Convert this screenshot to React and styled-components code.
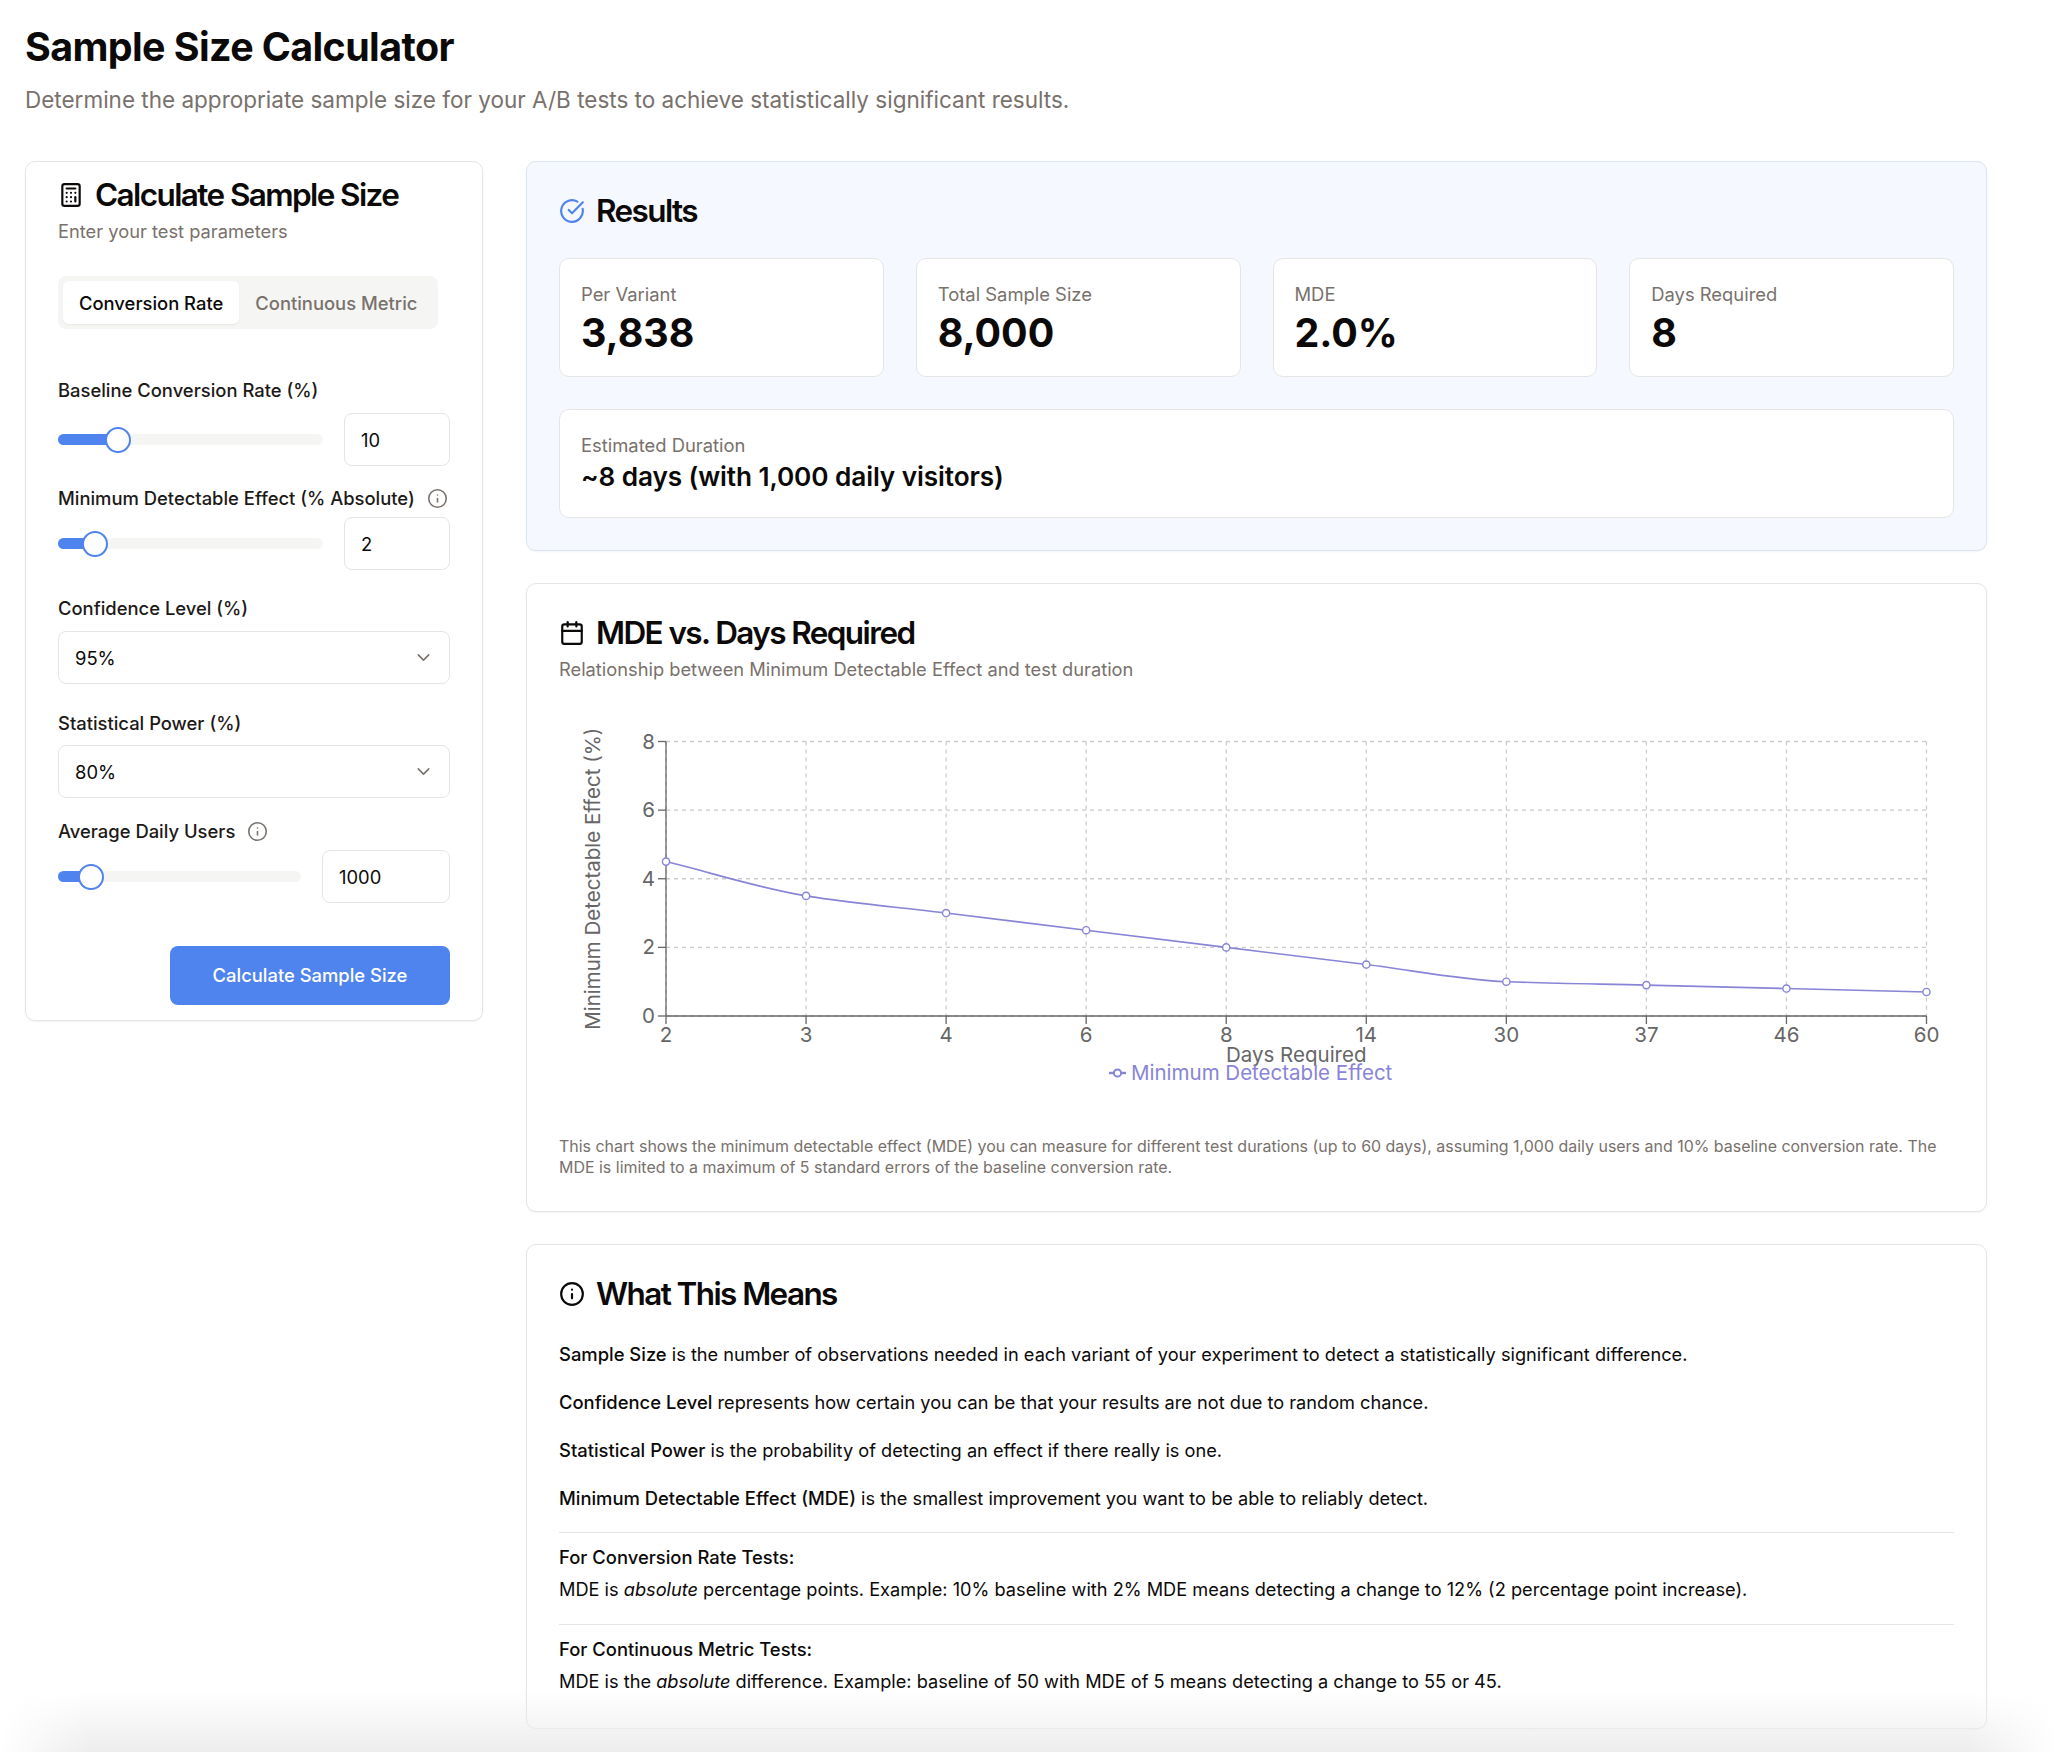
import React from "react";
import styled, { createGlobalStyle } from "styled-components";
import { Calculator, Calendar, ChevronDown, CircleCheckBig, Info } from "lucide-react";

const GlobalStyle = createGlobalStyle`
  html, body {
    margin: 0;
    padding: 0;
    background: #fff;
    overflow: hidden;
  }
  body {
    font-family: Inter, "Noto Sans", sans-serif;
    color: #0c0a09;
  }
  * { box-sizing: border-box; }
`;

const Page = styled.div`
  width: 2058px;
  height: 1752px;
  padding: 22px 71px 0 25px;
`;

const PageTitle = styled.h1`
  margin: 0;
  font-size: 39.4px;
  line-height: 50px;
  font-weight: 700;
  letter-spacing: -0.6px;
`;

const PageSubtitle = styled.p`
  margin: 11px 0 0;
  font-size: 22.5px;
  line-height: 34px;
  color: #78716c;
`;

const Columns = styled.div`
  display: grid;
  grid-template-columns: 458px 1461px;
  gap: 43px;
  margin-top: 44px;
  align-items: start;
`;

const Card = styled.section`
  background: ${(p) => (p.$tint ? "#f5f8fe" : "#fff")};
  border: 1.3px solid ${(p) => (p.$tint ? "#dbe5f5" : "#e7e5e4")};
  border-radius: 10px;
  box-shadow: 0 1px 2px rgba(0, 0, 0, 0.05);
`;

const SideCard = styled(Card)`
  height: 860px;
  padding: 13px 32px 0;
`;

const MainColumn = styled.div`
  display: flex;
  flex-direction: column;
  gap: 32px;
`;

const HeadRow = styled.div`
  display: flex;
  align-items: center;
  gap: ${(p) => p.$gap || 11}px;
  height: 40px;
  color: ${(p) => p.$iconColor || "#0c0a09"};
`;

const CardTitle = styled.h2`
  margin: 0;
  font-size: 31.5px;
  line-height: 40px;
  font-weight: 600;
  letter-spacing: -1.6px;
  color: #0c0a09;
`;

const CardNote = styled.p`
  margin: 3px 0 0;
  font-size: 18.3px;
  line-height: 26px;
  color: #78716c;
`;

const Tabs = styled.div`
  display: inline-flex;
  margin-top: 32px;
  padding: 5px;
  background: #f5f5f4;
  border-radius: 8px;
`;

const Tab = styled.div`
  height: 43px;
  padding: 0 16px;
  display: flex;
  align-items: center;
  font-size: 18.4px;
  font-weight: 500;
  border-radius: 6px;
  color: ${(p) => (p.$active ? "#0c0a09" : "#78716c")};
  background: ${(p) => (p.$active ? "#fff" : "transparent")};
  box-shadow: ${(p) => (p.$active ? "0 1px 2px rgba(0,0,0,.06)" : "none")};
`;

const Field = styled.div`
  margin-top: ${(p) => p.$top}px;
  display: flex;
  flex-direction: column;
  gap: ${(p) => p.$gap}px;
`;

const Label = styled.div`
  display: flex;
  align-items: center;
  gap: 12px;
  height: 21px;
  font-size: 18.4px;
  line-height: 21px;
  font-weight: 500;
  color: #1c1917;
  white-space: nowrap;
  svg { color: #78716c; }
`;

const SliderRow = styled.div`
  display: flex;
  align-items: center;
  gap: 21px;
`;

const Track = styled.div`
  position: relative;
  flex: 1;
  height: 10.5px;
  border-radius: 6px;
  background: #f5f5f4;
`;

const TrackFill = styled.div`
  height: 100%;
  border-radius: 6px;
  background: #4f84ee;
`;

const Thumb = styled.div`
  position: absolute;
  top: 50%;
  width: 26px;
  height: 26px;
  transform: translate(-50%, -50%);
  background: #fff;
  border: 2.6px solid #4f84ee;
  border-radius: 50%;
`;

const NumberBox = styled.div`
  flex: none;
  width: ${(p) => p.$width}px;
  height: 53px;
  padding: 0 16px;
  display: flex;
  align-items: center;
  border: 1.3px solid #e7e5e4;
  border-radius: 8px;
  font-size: 18.4px;
  background: #fff;
`;

const SelectBox = styled(NumberBox)`
  width: 100%;
  justify-content: space-between;
  padding-right: 15px;
  svg { color: #78716c; }
`;

const SubmitRow = styled.div`
  display: flex;
  justify-content: flex-end;
  margin-top: 42.7px;
`;

const SubmitButton = styled.button`
  width: 280px;
  height: 59px;
  border: none;
  border-radius: 8px;
  background: #4f84ee;
  color: #fff;
  font-family: inherit;
  font-size: 18.4px;
  font-weight: 500;
`;

const ResultsCard = styled(Card)`
  height: 390px;
  padding: 29px 32px 0;
`;

const StatGrid = styled.div`
  display: grid;
  grid-template-columns: repeat(4, 1fr);
  gap: 32px;
  margin-top: 27px;
`;

const Stat = styled.div`
  height: 119px;
  padding: 23px 21px 0;
  background: #fff;
  border: 1.3px solid #e7e5e4;
  border-radius: 10px;
`;

const StatLabel = styled.div`
  font-size: 18.4px;
  line-height: 24px;
  color: #78716c;
`;

const StatValue = styled.div`
  font-size: 39.4px;
  line-height: 50px;
  font-weight: 700;
  margin-top: 2px;
`;

const DurationCard = styled(Stat)`
  height: 109px;
  margin-top: 32px;
`;

const DurationValue = styled.div`
  font-size: 26.2px;
  line-height: 36px;
  font-weight: 600;
  letter-spacing: -0.1px;
  margin-top: 2px;
`;

const ChartCard = styled(Card)`
  height: 629px;
  padding: 29px 32px 0;
`;

const ChartNote = styled.p`
  margin: 23px 0 0;
  font-size: 15.96px;
  line-height: 21px;
  color: #78716c;
`;

const ChartSvg = styled.svg`
  display: block;
  margin: 30.7px 0 0 -32px;
  overflow: visible;
`;

const AxisText = styled.text`
  font-family: Inter, "Noto Sans", sans-serif;
  font-size: 20.5px;
  fill: #666;
`;

const LegendText = styled(AxisText)`
  fill: #8884d8;
`;

const ExplainCard = styled(Card)`
  height: 485px;
  padding: 29px 32px 0;
`;

const Explain = styled.p`
  margin: ${(p) => p.$top ?? 0}px 0 0;
  font-size: 18.2px;
  line-height: 26px;
  color: #0c0a09;
  b { font-weight: 500; font-size: 18.4px; }
`;

const Divider = styled.hr`
  margin: ${(p) => p.$top}px 0 0;
  border: none;
  border-top: 1.3px solid #e7e5e4;
`;

const BottomFade = styled.div`
  position: fixed;
  left: 0;
  right: 0;
  bottom: 0;
  height: 60px;
  pointer-events: none;
  background: linear-gradient(to top, #ededed, rgba(240, 240, 240, 0));
  -webkit-mask-image: linear-gradient(to right, transparent, #000 90px, #000 1968px, transparent);
  mask-image: linear-gradient(to right, transparent, #000 90px, #000 1968px, transparent);
`;

const stats = [
  ["Per Variant", "3,838"],
  ["Total Sample Size", "8,000"],
  ["MDE", "2.0%"],
  ["Days Required", "8"],
];

// chart data
const days = [2, 3, 4, 6, 8, 14, 30, 37, 46, 60];
const mde = [4.5, 3.5, 3, 2.5, 2, 1.5, 1, 0.9, 0.8, 0.7];

// offsets of the plot inside the svg (svg starts at the card's left edge)
const X0 = 139;
const X1 = 1399.5;
const Y0 = 158.5;
const Y1 = 433;
const stepX = (X1 - X0) / 9;
const px = (i) => X0 + i * stepX;
const py = (v) => Y1 - (v / 8) * (Y1 - Y0);

// same monotone curve recharts draws
const monotonePath = (pts) => {
  const n = pts.length;
  const s = [];
  for (let i = 0; i < n - 1; i++) s.push((pts[i + 1][1] - pts[i][1]) / (pts[i + 1][0] - pts[i][0]));
  const t = pts.map((_, i) => {
    if (i === 0) return s[0];
    if (i === n - 1) return s[n - 2];
    if (s[i - 1] * s[i] <= 0) return 0;
    return (2 * s[i - 1] * s[i]) / (s[i - 1] + s[i]);
  });
  let d = `M${pts[0][0]},${pts[0][1]}`;
  for (let i = 0; i < n - 1; i++) {
    const h = (pts[i + 1][0] - pts[i][0]) / 3;
    d += `C${pts[i][0] + h},${pts[i][1] + t[i] * h},${pts[i + 1][0] - h},${pts[i + 1][1] - t[i + 1] * h},${pts[i + 1][0]},${pts[i + 1][1]}`;
  }
  return d;
};

const Chart = () => {
  const points = mde.map((v, i) => [px(i), py(v)]);
  return (
    <ChartSvg width="1461" height="400" viewBox="0 130 1461 400">
      <g stroke="#ccc" strokeWidth="1.3" strokeDasharray="4 4" fill="none">
        {[0, 2, 4, 6, 8].map((v) => (
          <line key={v} x1={X0} x2={X1} y1={py(v)} y2={py(v)} />
        ))}
        {days.map((d, i) => (
          <line key={d} x1={px(i)} x2={px(i)} y1={Y0} y2={Y1} />
        ))}
      </g>
      <g stroke="#666" strokeWidth="1.3">
        <line x1={X0} x2={X0} y1={Y0} y2={Y1} />
        <line x1={X0} x2={X1} y1={Y1} y2={Y1} />
        {[0, 2, 4, 6, 8].map((v) => (
          <line key={v} x1={X0 - 8} x2={X0} y1={py(v)} y2={py(v)} />
        ))}
        {days.map((d, i) => (
          <line key={d} x1={px(i)} x2={px(i)} y1={Y1} y2={Y1 + 8} />
        ))}
      </g>
      {[0, 2, 4, 6, 8].map((v) => (
        <AxisText key={v} x={X0 - 11} y={py(v) + 7} textAnchor="end">{v}</AxisText>
      ))}
      {days.map((d, i) => (
        <AxisText key={d} x={px(i)} y={Y1 + 26} textAnchor="middle">{d}</AxisText>
      ))}
      <AxisText x={0} y={0} textAnchor="middle" transform={`translate(73 ${(Y0 + Y1) / 2}) rotate(-90)`}>
        Minimum Detectable Effect (%)
      </AxisText>
      <AxisText x={X0 + (X1 - X0) / 2} y={Y1 + 46} textAnchor="middle">Days Required</AxisText>
      <path d={monotonePath(points)} fill="none" stroke="#8884d8" strokeWidth="1.6" />
      {points.map(([x, y]) => (
        <circle key={x} cx={x} cy={y} r="3.6" fill="#fff" stroke="#8884d8" strokeWidth="1.4" />
      ))}
      <line x1={582} x2={599} y1={Y1 + 57} y2={Y1 + 57} stroke="#8884d8" strokeWidth="2.4" />
      <circle cx={590.5} cy={Y1 + 57} r="3.6" fill="#fff" stroke="#8884d8" strokeWidth="2" />
      <LegendText x={604} y={Y1 + 64}>Minimum Detectable Effect</LegendText>
    </ChartSvg>
  );
};

const App = () => {
  return (
    <Page>
      <GlobalStyle />
      <PageTitle>Sample Size Calculator</PageTitle>
      <PageSubtitle>Determine the appropriate sample size for your A/B tests to achieve statistically significant results.</PageSubtitle>

      <Columns>
        <SideCard>
          <HeadRow $gap={11}>
            <Calculator size={26} strokeWidth={2} />
            <CardTitle>Calculate Sample Size</CardTitle>
          </HeadRow>
          <CardNote>Enter your test parameters</CardNote>
          <Tabs>
            <Tab $active>Conversion Rate</Tab>
            <Tab>Continuous Metric</Tab>
          </Tabs>

          <Field $top={50.6} $gap={12.5}>
            <Label>Baseline Conversion Rate (%)</Label>
            <SliderRow>
              <Track>
                <TrackFill style={{ width: "22.6%" }} />
                <Thumb style={{ left: "22.6%" }} />
              </Track>
              <NumberBox $width={106}>10</NumberBox>
            </SliderRow>
          </Field>

          <Field $top={22.3} $gap={7.7}>
            <Label>
              Minimum Detectable Effect (% Absolute)
              <Info size={21} strokeWidth={1.8} />
            </Label>
            <SliderRow>
              <Track>
                <TrackFill style={{ width: "14%" }} />
                <Thumb style={{ left: "14%" }} />
              </Track>
              <NumberBox $width={106}>2</NumberBox>
            </SliderRow>
          </Field>

          <Field $top={28} $gap={12}>
            <Label>Confidence Level (%)</Label>
            <SelectBox>95%<ChevronDown size={21} strokeWidth={1.8} /></SelectBox>
          </Field>

          <Field $top={29.3} $gap={10.7}>
            <Label>Statistical Power (%)</Label>
            <SelectBox>80%<ChevronDown size={21} strokeWidth={1.8} /></SelectBox>
          </Field>

          <Field $top={23.3} $gap={7.7}>
            <Label>
              Average Daily Users
              <Info size={21} strokeWidth={1.8} />
            </Label>
            <SliderRow>
              <Track>
                <TrackFill style={{ width: "13.5%" }} />
                <Thumb style={{ left: "13.5%" }} />
              </Track>
              <NumberBox $width={128}>1000</NumberBox>
            </SliderRow>
          </Field>

          <SubmitRow>
            <SubmitButton>Calculate Sample Size</SubmitButton>
          </SubmitRow>
        </SideCard>

        <MainColumn>
          <ResultsCard $tint>
            <HeadRow $iconColor="#4f84ee" $gap={11}>
              <CircleCheckBig size={26} strokeWidth={2} />
              <CardTitle>Results</CardTitle>
            </HeadRow>
            <StatGrid>
              {stats.map(([label, value]) => (
                <Stat key={label}>
                  <StatLabel>{label}</StatLabel>
                  <StatValue>{value}</StatValue>
                </Stat>
              ))}
            </StatGrid>
            <DurationCard>
              <StatLabel>Estimated Duration</StatLabel>
              <DurationValue>~8 days (with 1,000 daily visitors)</DurationValue>
            </DurationCard>
          </ResultsCard>

          <ChartCard>
            <HeadRow>
              <Calendar size={26} strokeWidth={2} />
              <CardTitle>MDE vs. Days Required</CardTitle>
            </HeadRow>
            <CardNote>Relationship between Minimum Detectable Effect and test duration</CardNote>
            <Chart />
            <ChartNote>
              This chart shows the minimum detectable effect (MDE) you can measure for different test durations (up to 60 days), assuming 1,000 daily users and 10% baseline conversion rate. The MDE is limited to a maximum of 5 standard errors of the baseline conversion rate.
            </ChartNote>
          </ChartCard>

          <ExplainCard>
            <HeadRow>
              <Info size={26} strokeWidth={2} />
              <CardTitle>What This Means</CardTitle>
            </HeadRow>
            <Explain $top={27}><b>Sample Size</b> is the number of observations needed in each variant of your experiment to detect a statistically significant difference.</Explain>
            <Explain $top={22}><b>Confidence Level</b> represents how certain you can be that your results are not due to random chance.</Explain>
            <Explain $top={22}><b>Statistical Power</b> is the probability of detecting an effect if there really is one.</Explain>
            <Explain $top={22}><b>Minimum Detectable Effect (MDE)</b> is the smallest improvement you want to be able to reliably detect.</Explain>
            <Divider $top={21} />
            <Explain $top={11}><b>For Conversion Rate Tests:</b></Explain>
            <Explain $top={6}>MDE is <em>absolute</em> percentage points. Example: 10% baseline with 2% MDE means detecting a change to 12% (2 percentage point increase).</Explain>
            <Divider $top={22} />
            <Explain $top={11}><b>For Continuous Metric Tests:</b></Explain>
            <Explain $top={6}>MDE is the <em>absolute</em> difference. Example: baseline of 50 with MDE of 5 means detecting a change to 55 or 45.</Explain>
          </ExplainCard>
        </MainColumn>
      </Columns>
      <BottomFade />
    </Page>
  );
};

export default App;
